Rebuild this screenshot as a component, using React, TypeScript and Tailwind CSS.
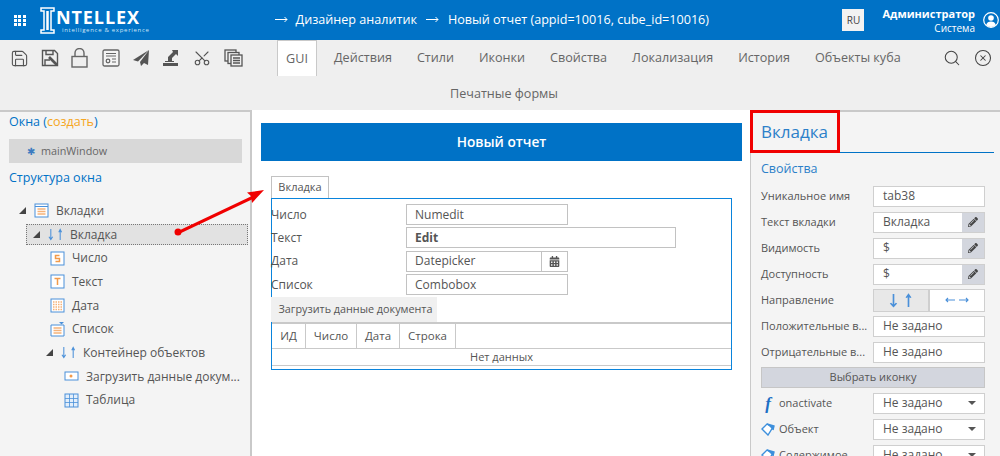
// App.tsx
import React from 'react';
import { Search, CircleX, Scissors, Save } from 'lucide-react';
import { FaCalendarAlt, FaPencilAlt } from 'react-icons/fa';

const font = "font-['Open_Sans',sans-serif]";

const UpDown = ({ big }: { big?: boolean }) => (
  <svg width={big ? 24 : 15} height={big ? 15 : 13} viewBox="0 0 16 14" preserveAspectRatio="none" fill="none" stroke="#4a90d9" strokeWidth="1.100">
    <path d="M3 1v11M1 9.500 3 12.500 5 9.500" />
    <path d="M13 13V2M11.500 4.500 13 1.500 14.500 4.500" />
  </svg>
);

const Triangle = () => (
  <svg width="7" height="7" viewBox="0 0 7 7" className="shrink-0">
    <path d="M7 0v7H0z" fill="#444" />
  </svg>
);

const HeaderArrow = () => (
  <svg width="13" height="7" viewBox="0 0 13 7" fill="none" stroke="#fff" strokeWidth="1" className="shrink-0">
    <path d="M0 3.500h12M9.500 1l2.500 2.500L9.500 6" />
  </svg>
);

const TreeIcon = ({ kind }: { kind: string }) => (
  <svg width="15" height="15" viewBox="0 0 15 15" className="shrink-0" fill="none">
    {kind === 'tabs' && (
      <>
        <rect x="1" y="1" width="13" height="13" fill="#fff" stroke="#4a90d9" />
        <path d="M1 3.500h13" stroke="#4a90d9" />
        <path d="M3.500 6h8M3.500 8.500h8M3.500 11h8" stroke="#f5b27a" strokeWidth="1.400" />
      </>
    )}
    {kind === 'num' && (
      <>
        <rect x="1" y="1" width="13" height="13" fill="#fff" stroke="#4a90d9" />
        <path d="M9.500 4.500h-4v3h4v3h-4" stroke="#f29a4a" strokeWidth="1.500" />
      </>
    )}
    {kind === 'text' && (
      <>
        <rect x="1" y="1" width="13" height="13" fill="#fff" stroke="#4a90d9" />
        <path d="M4.500 4.500h6M7.500 4.500v6.500" stroke="#f29a4a" strokeWidth="1.500" />
      </>
    )}
    {kind === 'date' && (
      <>
        <rect x="1" y="1" width="13" height="13" fill="#fff" stroke="#4a90d9" />
        <path d="M3 4h9M3 6.500h9M3 9h9M3 11.500h9" stroke="#f5b27a" strokeDasharray="1.500 1" strokeWidth="1.300" />
      </>
    )}
    {kind === 'list' && (
      <>
        <path d="M1 3h13v11H1z" fill="#fff" stroke="#4a90d9" />
        <path d="M9 0h5l-2.500 2.500z" fill="#4a90d9" />
        <path d="M3.500 6h8M3.500 8.500h8M3.500 11h8" stroke="#f5b27a" strokeWidth="1.400" />
      </>
    )}
    {kind === 'button' && (
      <>
        <rect x="1" y="3" width="13" height="8" fill="#fff" stroke="#4a90d9" />
        <circle cx="7" cy="7" r="1.500" fill="#f29a4a" />
      </>
    )}
    {kind === 'table' && (
      <>
        <rect x="1" y="1" width="13" height="13" fill="#e3eefa" stroke="#4a90d9" />
        <path d="M1 5.500h13M1 9.500h13M5.500 1v13M9.500 1v13" stroke="#4a90d9" strokeWidth=".8" />
      </>
    )}
  </svg>
);

const ToolIcon = ({ kind }: { kind: string }) => {
  if (kind === 'saveas')
    return (
      <svg width="18" height="18" viewBox="0 0 18 18" fill="none" stroke="#555" strokeWidth="1.400">
        <path d="M1.500 1.500h12l3 3v12h-15z" />
        <path d="M5 1.500v4h7v-4M4 16v-5h5" />
        <path d="M8 8l8 8" strokeWidth="2.600" />
      </svg>
    );
  if (kind === 'lock')
    return (
      <svg width="17" height="20" viewBox="0 0 17 20" fill="none" stroke="#666" strokeWidth="1.400">
        <rect x="1" y="8.500" width="15" height="10.500" />
        <path d="M4 8.500V5a4.500 4.500 0 0 1 9 0v3.500" />
      </svg>
    );
  if (kind === 'cert')
    return (
      <svg width="18" height="18" viewBox="0 0 18 18" fill="#f4f4f4" stroke="#666" strokeWidth="1.300">
        <rect x="1" y="1" width="16" height="16" rx="1.500" />
        <path d="M4 4.500h10M4 7h10M10 10h4M10 13h4" strokeWidth="1" />
        <circle cx="6" cy="12" r="1.800" />
      </svg>
    );
  if (kind === 'plane')
    return (
      <svg width="18" height="18" viewBox="0 0 18 18">
        <path d="M17 1 1 11l5 1.500z" fill="#555" />
        <path d="M17 1 8 13l1 4 3-3 4 2z" fill="#555" />
      </svg>
    );
  if (kind === 'export')
    return (
      <svg width="16" height="18" viewBox="0 0 16 18">
        <path d="M0 14h15v3H0z" fill="#555" />
        <path d="M2 12h9v1H2z" fill="#555" />
        <path d="M9 1h6v6l-2-2-4 4v3H5V8l5-5z" fill="#555" />
      </svg>
    );
  return (
    <svg width="19" height="18" viewBox="0 0 19 18" fill="#efefef" stroke="#555" strokeWidth="1.300">
      <rect x="1" y="1" width="11" height="11" />
      <rect x="4" y="3.500" width="11" height="11" />
      <rect x="7" y="6" width="11" height="11" />
      <path d="M9 9h7M9 11.500h7M9 14h7" />
    </svg>
  );
};

const tools = ['save', 'saveas', 'lock', 'cert', 'plane', 'export', 'cut', 'copy'];
const tabs = ['Действия', 'Стили', 'Иконки', 'Свойства', 'Локализация', 'История', 'Объекты куба'];

const tree = [
  { label: 'Вкладки', icon: 'tabs', pl: 'pl-[19px]', tri: true },
  { label: 'Вкладка', icon: 'updown', pl: 'pl-[6px]', tri: true, selected: true },
  { label: 'Число', icon: 'num', pl: 'pl-[50px]' },
  { label: 'Текст', icon: 'text', pl: 'pl-[50px]' },
  { label: 'Дата', icon: 'date', pl: 'pl-[50px]' },
  { label: 'Список', icon: 'list', pl: 'pl-[50px]' },
  { label: 'Контейнер объектов', icon: 'updown', pl: 'pl-[46px]', tri: true },
  { label: 'Загрузить данные докум...', icon: 'button', pl: 'pl-[64px]' },
  { label: 'Таблица', icon: 'table', pl: 'pl-[64px]' },
];

const Field = ({ value, bold, w, right }: { value: string; bold?: boolean; w: string; right?: boolean }) => (
  <div className={`flex h-[21px] items-center border border-[#c2c2c2] bg-white ${w}`}>
    <span className={`flex-1 pl-[8px] text-[12px] text-[#555] ${bold ? 'font-bold' : ''}`}>{value}</span>
    {right && (
      <span className="flex h-full w-[26px] items-center justify-center border-l border-[#c2c2c2]">
        <FaCalendarAlt size={11} className="text-[#555]" />
      </span>
    )}
  </div>
);

const FormRow = ({ label, children, h }: { label: string; children: React.ReactNode; h: string }) => (
  <div className={`flex items-center ${h}`}>
    <span className="w-[135px] shrink-0 text-[12px] leading-none text-[#555]">{label}</span>
    {children}
  </div>
);

const PropRow = ({ label, icon, children }: { label: string; icon?: React.ReactNode; children: React.ReactNode }) => (
  <div className="flex h-[26px] items-center">
    <div className="flex w-[112px] shrink-0 items-center gap-[4px] text-[11px] text-[#555]">
      {icon}
      <span className="whitespace-nowrap">{label}</span>
    </div>
    {children}
  </div>
);

const Input = ({ value, edit, select }: { value: string; edit?: boolean; select?: boolean }) => (
  <div className="flex h-[21px] w-[112px] items-center border border-[#cfcfcf] bg-white text-[12px] text-[#555]">
    <span className="flex-1 pl-[9px]">{value}</span>
    {edit && (
      <span className="flex h-full w-[22px] items-center justify-center bg-[#d3d6de]">
        <FaPencilAlt size={10} className="text-[#444]" />
      </span>
    )}
    {select && <span className="mr-[8px] h-0 w-0 border-x-[4px] border-t-[4px] border-x-transparent border-t-[#555]" />}
  </div>
);

const Diamond = () => (
  <svg width="14" height="14" viewBox="0 0 14 14" fill="#fff" stroke="#3d8fdc" strokeWidth="1.400" className="shrink-0">
    <path d="M1 7 6 2l6 3-5 8z" />
    <path d="M6 2l7 2-1 4" fill="#3d8fdc" />
  </svg>
);

export default function App() {
  return (
    <div className={`${font} relative flex h-[456px] w-[1000px] flex-col overflow-hidden bg-white`}>
      {/* шапка */}
      <header className="flex h-[40px] shrink-0 items-center bg-[#0072c6] text-white">
        <div className="ml-[14px] grid w-[12px] grid-cols-3 gap-[1px]">
          {Array.from({ length: 9 }).map((_, i) => (
            <span key={i} className="h-[3px] w-[3px] bg-white" />
          ))}
        </div>
        <div className="ml-[14px] flex items-center">
          <svg width="15" height="27" viewBox="0 0 15 27" fill="none" stroke="#fff" strokeWidth="1.500">
            <path d="M1 1h13v3h-3v19h3v3H1v-3h3V4H1z" />
            <path d="M7.500 4v19" strokeWidth="2.500" />
          </svg>
          <div className="ml-[1px] flex flex-col">
            <span className="mt-[2px] text-[18px] font-bold leading-[18px] tracking-[0.9px]">NTELLEX</span>
            <span className="ml-[6px] text-[6px] leading-[8px] tracking-[0.7px] text-[#cfe6f7]">intelligence &amp; experience</span>
          </div>
        </div>
        <div className="ml-[125px] flex items-center whitespace-nowrap text-[12.600px]">
          <HeaderArrow />
          <span className="ml-[8px]">Дизайнер аналитик</span>
          <span className="ml-[9px]"><HeaderArrow /></span>
          <span className="ml-[9px]">Новый отчет (appid=10016, cube_id=10016)</span>
        </div>
        <span className="ml-auto flex h-[22px] w-[22px] items-center justify-center bg-[#f2f2f2] text-[10px] text-[#444]">RU</span>
        <div className="ml-[18px] flex flex-col items-end">
          <span className="text-[11px] font-bold leading-[15px]">Администратор</span>
          <span className="text-[10px] leading-[14px]">Система</span>
        </div>
        <svg width="16" height="16" viewBox="0 0 16 16" className="ml-[8px] mr-[1px] shrink-0" fill="none">
          <circle cx="8" cy="8" r="7.300" stroke="#fff" strokeWidth="1.200" />
          <circle cx="8" cy="6" r="2.800" fill="#fff" />
          <path d="M3.200 13c.5-2.500 2.500-3.500 4.800-3.500s4.300 1 4.800 3.500a7 7 0 0 1-9.600 0z" fill="#fff" />
        </svg>
      </header>

      {/* панель инструментов */}
      <div className="relative flex h-[70px] shrink-0 bg-[#efefef]">
        <div className="flex h-[36px] items-center pl-[10px]">
          {tools.map((t) => (
            <span key={t} className="flex w-[30.500px] items-center justify-start">
              {t === 'save' && <Save size={19} strokeWidth={1.400} className="text-[#555]" />}
              {t === 'cut' && <Scissors size={18} strokeWidth={1.500} className="-rotate-90 text-[#555]" />}
              {t !== 'save' && t !== 'cut' && <ToolIcon kind={t} />}
            </span>
          ))}
        </div>
        <div className="flex-1">
          <div className="ml-[23px] flex h-[36px] items-center text-[12.600px] text-[#666]">
            <span className="flex h-full w-[40px] items-center justify-center border border-b-0 border-[#c9c9c9] bg-white pt-[1px]">GUI</span>
            {tabs.map((t, i) => (
              <span key={t} className={`whitespace-nowrap ${i === 0 ? 'ml-[17px]' : 'ml-[25px]'}`}>{t}</span>
            ))}
          </div>
          <div className="ml-[196px] mt-[9px] text-[12.600px] leading-[18px] text-[#666]">Печатные формы</div>
        </div>
        <div className="flex h-[36px] items-center gap-[13px] pr-[8px] text-[#444]">
          <Search size={18} strokeWidth={1.400} />
          <CircleX size={18} strokeWidth={1.400} />
        </div>
      </div>

      <div className="flex min-h-0 flex-1">
        {/* левая панель */}
        <aside className="w-[252px] shrink-0 border-r-2 border-t-2 border-[#c9c9c9] bg-[#f4f4f4]">
          <div className="px-[9px] text-[12.500px] leading-[20px] text-[#0072c6]">
            Окна (<span className="text-[#f5a623]">создать</span>)
          </div>
          <div className="mx-[9px] mt-[7px] flex h-[24px] w-[233px] items-center bg-[#d8d8d8] pl-[18px] text-[10.800px] text-[#666]">
            <span className="mr-[6px] text-[10px] leading-none text-[#3d7cc0]">✱</span>mainWindow
          </div>
          <div className="px-[9px] pt-[5px] text-[12.500px] leading-[20px] text-[#0072c6]">Структура окна</div>
          <div className="mt-[11px]">
            {tree.map((n) => (
              <div
                key={n.label}
                className={`flex items-center whitespace-nowrap text-[12px] text-[#555] ${n.pl} ${
                  n.selected ? 'my-[1px] ml-[26px] h-[21.700px] w-[222px] border border-dotted border-[#777] bg-[#e2e2e2]' : 'h-[23.700px]'
                }`}
              >
                {n.tri ? <Triangle /> : null}
                <span className={n.tri ? 'ml-[8px] flex items-center' : 'flex items-center'}>
                  {n.icon === 'updown' ? <UpDown /> : <TreeIcon kind={n.icon} />}
                </span>
                <span className="ml-[7px]">{n.label}</span>
              </div>
            ))}
          </div>
        </aside>

        {/* центр */}
        <main className="w-[498px] shrink-0 pl-[9px] pr-[8px] pt-[13px]">
          <div className="flex h-[38px] items-center justify-center bg-[#0072c6] text-[13.700px] font-semibold text-white">Новый отчет</div>
          <div className="ml-[10px] mt-[15px] w-[461px]">
            <div className="flex h-[22px] w-[58px] items-center justify-center border border-b-0 border-[#c2c2c2] text-[11px] text-[#555]">Вкладка</div>
            <div className="border border-[#0a84dc]">
              <div className="-ml-[1px] pt-[4px]">
                <FormRow label="Число" h="h-[23px]"><Field value="Numedit" w="w-[162px]" /></FormRow>
                <FormRow label="Текст" h="h-[23px]"><Field value="Edit" bold w="w-[270px]" /></FormRow>
                <FormRow label="Дата" h="h-[24px]"><Field value="Datepicker" right w="w-[162px]" /></FormRow>
                <FormRow label="Список" h="h-[23px]"><Field value="Combobox" w="w-[162px]" /></FormRow>
                <div className="mt-[1px] flex h-[25px] w-[166px] items-center justify-center whitespace-nowrap bg-[#f0f0f0] pl-[3px] text-[10.800px] text-[#555]">Загрузить данные документа</div>
              </div>
              <div className="border-t-2 border-[#c9c9c9]">
                <div className="flex h-[25px] items-center border-b border-[#c9c9c9] text-[11.500px] text-[#555]">
                  <span className="flex h-full w-[34px] items-center justify-center border-r border-[#c9c9c9]">ИД</span>
                  <span className="flex h-full w-[51px] items-center justify-center border-r border-[#c9c9c9]">Число</span>
                  <span className="flex h-full w-[43px] items-center justify-center border-r border-[#c9c9c9]">Дата</span>
                  <span className="flex h-full w-[56px] items-center justify-center border-r border-[#c9c9c9]">Строка</span>
                </div>
                <div className="flex h-[17px] items-center justify-center border-b border-[#c9c9c9] text-[11px] text-[#555]">Нет данных</div>
                <div className="h-[3px]" />
              </div>
            </div>
          </div>
        </main>

        {/* правая панель */}
        <aside className="flex-1 border-l border-t-2 border-[#c9c9c9] bg-[#f4f4f4]">
          <div className="mr-[6px] flex h-[41px] items-center border-b-[1.500px] border-[#0072c6] pl-[10px] text-[17px] text-[#2c80c9]">Вкладка</div>
          <div className="pl-[10px] pr-[15px]">
            <div className="pt-[6px] text-[12.500px] leading-[20px] text-[#2c80c9]">Свойства</div>
            <div className="mt-[4px]">
              <PropRow label="Уникальное имя"><Input value="tab38" /></PropRow>
              <PropRow label="Текст вкладки"><Input value="Вкладка" edit /></PropRow>
              <PropRow label="Видимость"><Input value="$" edit /></PropRow>
              <PropRow label="Доступность"><Input value="$" edit /></PropRow>
              <PropRow label="Направление">
                <div className="flex h-[23px] w-[112px] border border-[#cfcfcf]">
                  <span className="flex w-[56px] items-center justify-center border-r-2 border-[#cfcfcf] bg-[#e8e8e8]"><UpDown big /></span>
                  <span className="flex flex-1 items-center justify-center bg-white">
                    <svg width="24" height="8" viewBox="0 0 24 8" fill="none" stroke="#4a90d9" strokeWidth="1.100">
                      <path d="M10 4H1M3 2 1 4l2 2M14 4h9M21 2l2 2-2 2" />
                    </svg>
                  </span>
                </div>
              </PropRow>
              <PropRow label="Положительные в..."><Input value="Не задано" /></PropRow>
              <PropRow label="Отрицательные в..."><Input value="Не задано" /></PropRow>
              <div className="mb-[2px] mt-[2px] flex h-[21px] items-center justify-center border border-[#c6c6c6] bg-[#d3d6de] text-[11px] text-[#555]">Выбрать иконку</div>
              <PropRow label="onactivate" icon={<span className="w-[14px] text-center font-['Liberation_Serif',serif] text-[17px] font-bold italic leading-none text-[#1c6fc4]">f</span>}><Input value="Не задано" select /></PropRow>
              <PropRow label="Объект" icon={<Diamond />}><Input value="Не задано" select /></PropRow>
              <PropRow label="Содержимое" icon={<Diamond />}><Input value="Не задано" select /></PropRow>
            </div>
          </div>
        </aside>
      </div>

      {/* разметка поверх скриншота */}
      <div className="pointer-events-none absolute left-[750px] top-[110px] h-[43px] w-[90px] border-[3px] border-[#f00000]" />
      <svg className="pointer-events-none absolute left-0 top-0" width="1000" height="456" fill="none">
        <path d="M178 231 L254 195 L255 198 L179 234 Z" fill="#f00000" />
        <circle cx="178" cy="232" r="3.500" fill="#f00000" />
        <path d="M264 190 L247 192.500 L251 196 L252 203 Z" fill="#f00000" />
      </svg>
    </div>
  );
}
